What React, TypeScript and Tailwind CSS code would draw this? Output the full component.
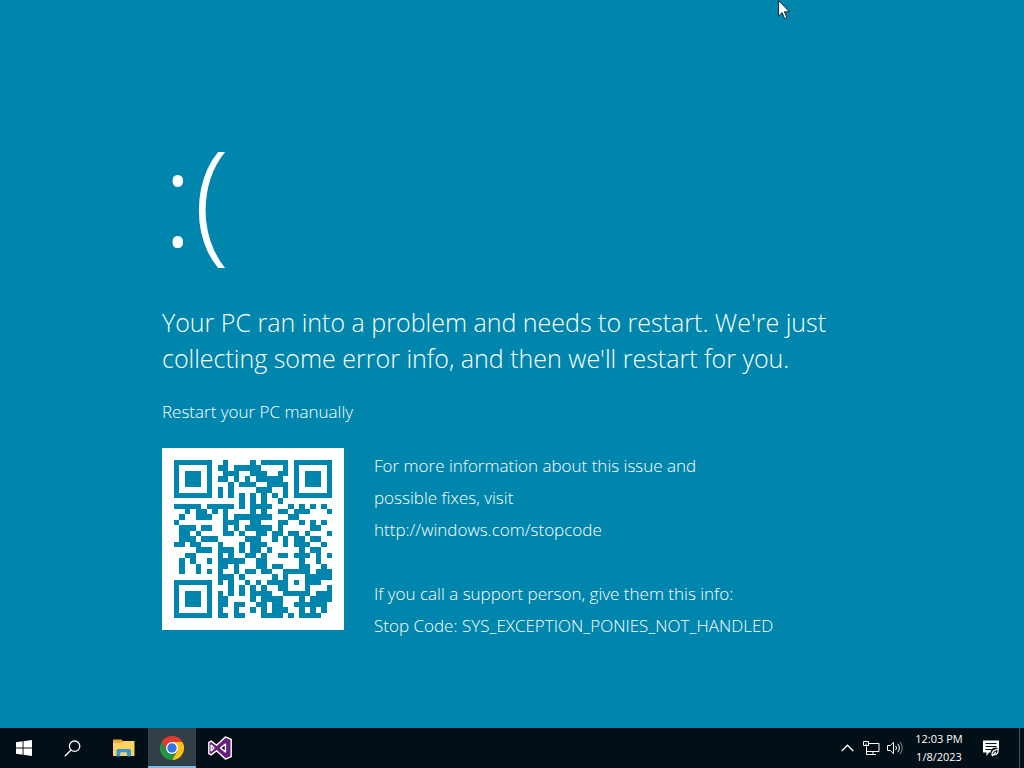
import type { ReactNode } from 'react';

const QR_SIZE = 29;
const DATA_CODEWORDS = 55;
const ECC_CODEWORDS = 15;
const FORMAT_BITS = '111110110101010';

function multiply(a: number, b: number): number {
  let product = 0;
  for (let i = 7; i >= 0; i--) {
    product = (product << 1) ^ ((product >>> 7) * 0x11d);
    product ^= ((b >>> i) & 1) * a;
  }
  return product;
}

function errorCorrection(data: number[]): number[] {
  const divisor: number[] = new Array(ECC_CODEWORDS).fill(0);
  divisor[ECC_CODEWORDS - 1] = 1;
  let root = 1;
  for (let i = 0; i < ECC_CODEWORDS; i++) {
    for (let j = 0; j < ECC_CODEWORDS; j++) {
      divisor[j] = multiply(divisor[j], root);
      if (j + 1 < ECC_CODEWORDS) divisor[j] ^= divisor[j + 1];
    }
    root = multiply(root, 2);
  }
  const rest: number[] = new Array(ECC_CODEWORDS).fill(0);
  for (const byte of data) {
    const factor = byte ^ (rest.shift() as number);
    rest.push(0);
    divisor.forEach((d, i) => (rest[i] ^= multiply(d, factor)));
  }
  return rest;
}

// Version 3, level L, mask 2, byte mode.
function buildQr(text: string): boolean[][] {
  const grid: (boolean | null)[][] = Array.from({ length: QR_SIZE }, () => new Array(QR_SIZE).fill(null));
  const put = (r: number, c: number, dark: boolean) => {
    if (r >= 0 && c >= 0 && r < QR_SIZE && c < QR_SIZE) grid[r][c] = dark;
  };
  for (let i = 0; i < QR_SIZE; i++) {
    put(6, i, i % 2 === 0);
    put(i, 6, i % 2 === 0);
  }
  for (const [row, col] of [[3, 3], [3, QR_SIZE - 4], [QR_SIZE - 4, 3]]) {
    for (let dr = -4; dr <= 4; dr++)
      for (let dc = -4; dc <= 4; dc++) {
        const d = Math.max(Math.abs(dr), Math.abs(dc));
        put(row + dr, col + dc, d !== 2 && d !== 4);
      }
  }
  for (let dr = -2; dr <= 2; dr++)
    for (let dc = -2; dc <= 2; dc++) put(22 + dr, 22 + dc, Math.max(Math.abs(dr), Math.abs(dc)) !== 1);

  const format = [...FORMAT_BITS].map((b) => b === '1');
  [0, 1, 2, 3, 4, 5, 7, 8].forEach((c, i) => put(8, c, format[i]));
  [7, 5, 4, 3, 2, 1, 0].forEach((r, i) => put(r, 8, format[8 + i]));
  for (let i = 0; i < 7; i++) put(QR_SIZE - 1 - i, 8, format[i]);
  for (let i = 0; i < 8; i++) put(8, QR_SIZE - 8 + i, format[7 + i]);
  put(QR_SIZE - 8, 8, true);

  let bits = '0100' + text.length.toString(2).padStart(8, '0');
  for (const ch of text) bits += ch.charCodeAt(0).toString(2).padStart(8, '0');
  bits += '0000';
  const data: number[] = [];
  for (let i = 0; i < bits.length; i += 8) data.push(parseInt(bits.slice(i, i + 8), 2));
  for (let pad = 0xec; data.length < DATA_CODEWORDS; pad ^= 0xec ^ 0x11) data.push(pad);
  const all = [...data, ...errorCorrection(data)];

  let n = 0;
  for (let right = QR_SIZE - 1; right >= 1; right -= 2) {
    if (right === 6) right = 5;
    const up = ((right + 1) & 2) === 0;
    for (let v = 0; v < QR_SIZE; v++)
      for (let j = 0; j < 2; j++) {
        const c = right - j;
        const r = up ? QR_SIZE - 1 - v : v;
        if (grid[r][c] !== null) continue;
        const bit = n < all.length * 8 ? (all[n >>> 3] >>> (7 - (n & 7))) & 1 : 1;
        n++;
        grid[r][c] = (bit === 1) !== (c % 3 === 0);
      }
  }
  return grid as boolean[][];
}

const qr = buildQr('https://www.youtube.com/watch?v=dQw4w9WgXcQ');

function QrCode() {
  const path = qr
    .map((row, r) => row.map((dark, c) => (dark ? `M${c} ${r}h1v1h-1z` : '')).join(''))
    .join('');
  return (
    <div className="h-[182px] w-[182px] shrink-0 bg-white p-3">
      <svg viewBox="0 0 29 29" className="block h-full w-full" shapeRendering="crispEdges" role="img" aria-label="QR code">
        <path d={path} fill="#0086ad" />
      </svg>
    </div>
  );
}

function TaskButton({ label, active = false, children }: { label: string; active?: boolean; children: ReactNode }) {
  return (
    <button
      aria-label={label}
      className={
        active
          ? 'flex w-12 items-center justify-center border-b-2 border-[#76b9ed] bg-[#333f47] pt-0.5'
          : 'flex w-12 items-center justify-center'
      }
    >
      {children}
    </button>
  );
}

function StartIcon() {
  return (
    <svg width="16" height="16" viewBox="0 0 16 16" fill="#fff">
      <path d="M0 2.2 6.6 1.3V7.6H0zM7.5 1.2 16 0V7.6H7.5zM0 8.4H6.6V14.7L0 13.8zM7.5 8.4H16V16L7.5 14.8z" />
    </svg>
  );
}

function SearchIcon() {
  return (
    <svg width="17" height="17" viewBox="0 0 17 17" fill="none" stroke="#fff" strokeWidth="1.3">
      <circle cx="10.6" cy="6.2" r="5.2" />
      <path d="M7 10 .8 16.2" />
    </svg>
  );
}

function FolderIcon() {
  return (
    <svg width="22" height="18" viewBox="0 0 22 18">
      <path d="M0 .5h8.500l1.500 2H0z" fill="#e8a33d" />
      <path d="M0 2h21.5v15H0z" fill="#fcd462" />
      <path d="M0 2h10l-1.500 2H0z" fill="#f0ad45" />
      <path d="M3.5 17.5v-6.200l1.200-1.300h12.100l1.200 1.300v6.200h-4v-4H7.500v4z" fill="#3d93cb" />
      <path d="M7.5 13.5h6.500V17H7.500z" fill="#f7d16b" />
    </svg>
  );
}

function ChromeIcon() {
  return (
    <svg width="24" height="24" viewBox="0 0 48 48">
      <path d="M24 12h20.800A24 24 0 0 1 24 48l10.400-18z" fill="#fbc116" />
      <path d="M3.2 12A24 24 0 0 1 44.8 12H24a12 12 0 0 0-10.400 18z" fill="#e33b2e" />
      <path d="M3.2 12A24 24 0 0 0 24 48l10.400-18A12 12 0 0 1 13.600 30z" fill="#229342" />
      <circle cx="24" cy="24" r="12" fill="#fff" />
      <circle cx="24" cy="24" r="9.400" fill="#2f74e8" />
    </svg>
  );
}

function VisualStudioIcon() {
  return (
    <svg width="24" height="24" viewBox="0 0 24 24">
      <path
        d="M17.4.9 23.2 3.3V20.7L17.4 23.1 8.6 14.8 3.2 18.9.8 17.7V6.3L3.2 5.1 8.6 9.2zM17.4 8.1 12.6 12l4.8 3.9zM3.2 9.2v5.6L6 12z"
        fill="#68217a"
        fillRule="evenodd"
        stroke="#fff"
        strokeWidth="1.4"
        strokeLinejoin="round"
      />
    </svg>
  );
}

function ChevronIcon() {
  return (
    <svg width="13" height="8" viewBox="0 0 13 8" fill="none" stroke="#fff" strokeWidth="1.3">
      <path d="M.7 7 6.5 1.2 12.3 7" />
    </svg>
  );
}

function NetworkIcon() {
  return (
    <svg width="17" height="15" viewBox="0 0 17 15" fill="none" stroke="#fff" strokeWidth="1">
      <path d="M5.500 2.500h10.500v8H3.500V5.500M10 10.500v3M6.500 13.500h6.500M.5.5h5v4h-5zM3 2.500v2M3.500 10v3.500h3" />
    </svg>
  );
}

function SpeakerIcon() {
  return (
    <svg width="17" height="14" viewBox="0 0 17 14" fill="none" stroke="#fff" strokeWidth="1">
      <path d="M.5 4.500h2.800L6.500 1.300v11.400L3.300 9.500H.5z" />
      <path d="M8.700 4.800q1.600 2.200 0 4.400M10.800 2.800q3.200 4.200 0 8.400" />
      <path d="M13 1q4.600 6 0 12" strokeOpacity=".5" />
    </svg>
  );
}

function NotificationIcon() {
  return (
    <svg width="17" height="17" viewBox="0 0 17 17">
      <path d="M0 .5h16v12H6l-2.500 3.500v-3.500H0z" fill="#fff" />
      <path d="M2.500 3.500h11M2.500 6.500h11M2.500 9.500h6" stroke="#06141b" />
      <circle cx="12.200" cy="12.200" r="4.600" fill="#06141b" />
      <path d="M9 15.500q-.5-5.500 6-6.200 1 5.500-4.500 5.700M9 16l4-4" fill="none" stroke="#fff" strokeWidth="1.200" />
    </svg>
  );
}

function Pointer() {
  return (
    <svg width="12" height="20" viewBox="0 0 12 20" className="absolute top-0 left-[778px]" aria-hidden="true">
      <path d="M.5.5v15.600l3.600-3.500 2.500 6 2.300-1-2.500-5.800h5z" fill="#fff" stroke="#1b2b3a" strokeWidth="1" />
    </svg>
  );
}

export default function App() {
  return (
    <div className="relative flex min-h-screen flex-col bg-[#0086ad] font-['Open_Sans','Noto_Sans',sans-serif] font-light text-white">
      <main className="flex-1 px-[162px] pt-32">
        <h1 className="text-[132px] leading-[136px] font-light">:(</h1>
        <p className="mt-10 text-[25px] leading-9">
          Your PC ran into a problem and needs to restart. We're just
          <br />
          collecting some error info, and then we'll restart for you.
        </p>
        <p className="mt-5 text-[17px] leading-8">Restart your PC manually</p>
        <div className="mt-5 flex gap-[30px]">
          <QrCode />
          <div className="pt-0.5 text-[17px] leading-8">
            <p>
              For more information about this issue and
              <br />
              possible fixes, visit
              <br />
              http://windows.com/stopcode
            </p>
            <p className="mt-8">
              If you call a support person, give them this info:
              <br />
              Stop Code: SYS_EXCEPTION_PONIES_NOT_HANDLED
            </p>
          </div>
        </div>
      </main>
      <footer className="flex h-10 items-stretch justify-between bg-[#020f16]">
        <nav className="flex gap-1" aria-label="Taskbar">
          <div className="flex">
            <TaskButton label="Start"><StartIcon /></TaskButton>
            <TaskButton label="Search"><SearchIcon /></TaskButton>
          </div>
          <div className="flex">
            <TaskButton label="File Explorer"><FolderIcon /></TaskButton>
            <TaskButton label="Google Chrome" active><ChromeIcon /></TaskButton>
            <TaskButton label="Visual Studio"><VisualStudioIcon /></TaskButton>
          </div>
        </nav>
        <div className="flex items-stretch">
          <div className="mr-2 flex">
            <button aria-label="Show hidden icons" className="flex w-6 items-center justify-center"><ChevronIcon /></button>
            <button aria-label="Network" className="flex w-6 items-center justify-center"><NetworkIcon /></button>
            <button aria-label="Volume" className="flex w-6 items-center justify-center"><SpeakerIcon /></button>
          </div>
          <button className="w-12 text-center text-[11px] leading-[18px] font-normal whitespace-nowrap">
            12:03 PM
            <br />
            1/8/2023
          </button>
          <button aria-label="Notifications" className="flex w-14 items-center justify-center"><NotificationIcon /></button>
          <button aria-label="Show desktop" className="w-[5px] border-l border-[#4b565c]" />
        </div>
      </footer>
      <Pointer />
    </div>
  );
}
